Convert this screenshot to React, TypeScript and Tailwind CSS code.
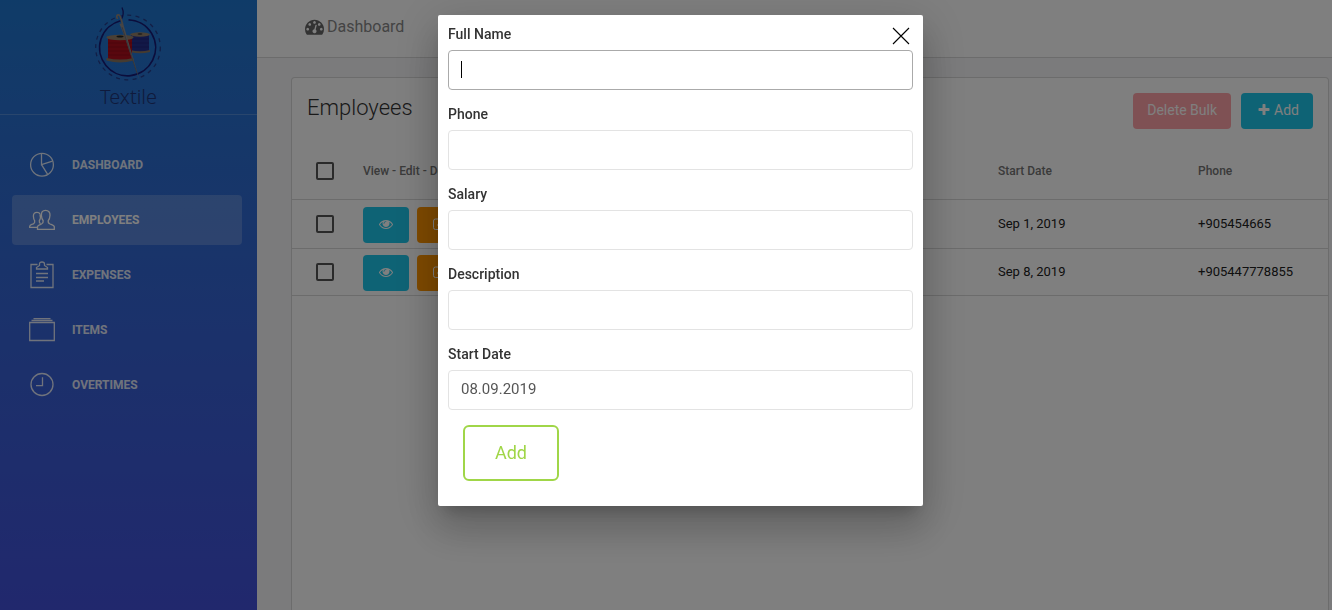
import type { ReactNode } from 'react';

const TACHOMETER =
  'M384 1152q0-53-37.5-90.5t-90.5-37.5-90.5 37.5-37.5 90.5 37.5 90.5 90.5 37.5 90.5-37.5 37.5-90.5zm192-448q0-53-37.5-90.5t-90.5-37.5-90.5 37.5-37.5 90.5 37.5 90.5 90.5 37.5 90.5-37.5 37.5-90.5zm428 481l101-382q6-26-7.5-48.5t-38.5-29.5-48 6.5-30 39.5l-101 382q-60 5-107 43.5t-63 98.5q-20 77 20 146t117 89 146-20 89-117q16-60-6-117t-72-91zm660-33q0-53-37.5-90.5t-90.5-37.5-90.5 37.5-37.5 90.5 37.5 90.5 90.5 37.5 90.5-37.5 37.5-90.5zm-640-640q0-53-37.5-90.5t-90.5-37.5-90.5 37.5-37.5 90.5 37.5 90.5 90.5 37.5 90.5-37.5 37.5-90.5zm448 192q0-53-37.5-90.5t-90.5-37.5-90.5 37.5-37.5 90.5 37.5 90.5 90.5 37.5 90.5-37.5 37.5-90.5zm320 448q0 261-141 483-19 29-54 29h-1402q-35 0-54-29-141-221-141-483 0-182 71-348t191-286 286-191 348-71 348 71 286 191 191 286 71 348z';
const EYE =
  'M1664 960q-152-236-381-353 61 104 61 225 0 185-131.5 316.5t-316.5 131.5-316.5-131.5-131.5-316.5q0-121 61-225-229 117-381 353 133 205 333.5 326.5t434.5 121.5 434.5-121.5 333.5-326.5zm-720-384q0-20-14-34t-34-14q-125 0-214.5 89.5t-89.5 214.5q0 20 14 34t34 14 34-14 14-34q0-86 61-147t147-61q20 0 34-14t14-34zm848 384q0 34-20 69-140 230-376.5 368.5t-499.5 138.5-499.5-139-376.5-368q-20-35-20-69t20-69q140-229 376.5-368t499.5-139 499.5 139 376.5 368q20 35 20 69z';
const PLUS =
  'M1600 736v192q0 40-28 68t-68 28h-416v416q0 40-28 68t-68 28h-192q-40 0-68-28t-28-68v-416h-416q-40 0-68-28t-28-68v-192q0-40 28-68t68-28h416v-416q0-40 28-68t68-28h192q40 0 68 28t28 68v416h416q40 0 68 28t28 68z';

function Glyph({ d, className }: { d: string; className: string }) {
  return (
    <svg viewBox="0 0 1792 1792" fill="currentColor" aria-hidden="true" className={className}>
      <path d={d} />
    </svg>
  );
}

function Logo() {
  return (
    <svg viewBox="0 0 68 76" className="h-[76px] w-[68px]" aria-hidden="true" fill="none">
      <circle cx="33" cy="40.500" r="32.300" stroke="#243d8c" strokeWidth="1.3" strokeDasharray="4 4.4" />
      <path d="M33.500 12.800A28 28 0 1 1 25.500 13.700" stroke="#171b78" strokeWidth="1.7" />
      <path d="M26 13C28.500 9 29 5 27 .500" stroke="#171b78" strokeWidth="1.3" />
      <rect x="36" y="28" width="18" height="17" fill="#25308e" />
      <path d="M36 32h18M36 36h18M36 40h18" stroke="#1b2478" strokeWidth=".6" />
      <ellipse cx="45" cy="27.500" rx="10" ry="2.200" fill="#94806a" />
      <ellipse cx="45" cy="27" rx="2.500" ry=".8" fill="#333" />
      <path d="M35 43q10 2.500 20 0v2q-10 2.500-20 0z" fill="#8a7660" />
      <rect x="13" y="31" width="24" height="22" fill="#b00f1c" />
      <path d="M13 36h24M13 40h24M13 44h24M13 48h24" stroke="#930b18" strokeWidth=".7" />
      <ellipse cx="25" cy="30.500" rx="13.500" ry="2.700" fill="#94806a" />
      <ellipse cx="25" cy="29.500" rx="3.500" ry="1" fill="#222" />
      <path d="M11.500 51q13.500 3 27 0v2.500q-13.500 4-27 0z" fill="#8a7660" />
      <path d="M24.500 17L28 16 45 75Q39.500 59 34 43Q29 27 24.500 17Z" fill="#8c8b8d" />
      <path d="M22.500 12Q20.500 7.500 24 8Q25.500 9 27.500 17" stroke="#93877c" strokeWidth="1.7" />
      <path d="M27 20L42 66" stroke="#62626a" strokeWidth=".7" />
    </svg>
  );
}

function MenuIcon({ children }: { children: ReactNode }) {
  return (
    <svg
      viewBox="0 0 26 28"
      className="h-[28px] w-[26px] shrink-0"
      fill="none"
      stroke="currentColor"
      strokeWidth="1.3"
      aria-hidden="true"
    >
      {children}
    </svg>
  );
}

const menu: { label: string; active?: boolean; icon: ReactNode }[] = [
  {
    label: 'Dashboard',
    icon: (
      <>
        <circle cx="13" cy="13.700" r="11.400" />
        <path d="M12.500 2.300V13.700L23.500 10.200M12.500 13.700L18.500 23.200" />
      </>
    ),
  },
  {
    label: 'Employees',
    active: true,
    icon: (
      <>
        <path d="M16.500 4.300C13.500 4.300 12.200 6.400 12.400 9.300C12.500 11.300 13 13.500 14.200 14.800C14.400 16.800 13.800 17.500 12.500 18C10.500 18.800 8.500 19.300 8.500 20.800V23.300H25.300V20.800C25.300 19.300 23 18.800 21 18C19.600 17.500 19 16.800 19.200 14.800C20.400 13.500 20.900 11.300 21 9.300C21.200 6.400 19.500 4.300 16.500 4.300Z" />
        <path d="M11 8C10.500 6.800 9.500 6.300 8 6.300C5.500 6.300 4.300 7.800 4.400 10.300C4.500 12.300 4.900 13.800 5.700 14.800C6 16.800 5.500 17.300 4.300 17.800C2.500 18.500 .700 18.800 .700 20.300V21.300H8.500M11 8.300C11.800 10.800 11.300 13.300 10.300 14.800C10.100 16.300 10.400 17 11.600 17.600" />
      </>
    ),
  },
  {
    label: 'Expenses',
    icon: (
      <>
        <path d="M8.500 3.500H2V26.500H24V3.500H17.500" />
        <path d="M7.500 8V6.500L10.500 4.500V3Q10.500 1 13 1T15.500 3V4.500L18.500 6.500V8Z" />
        <path d="M7 12.500H19M7 16.500H19M7 20H15" />
      </>
    ),
  },
  {
    label: 'Items',
    icon: (
      <>
        <path d="M.700 6.500H25.300V24.500H.700Z" />
        <path d="M2.500 4.500H23.500M4.500 2.700H21.500" />
      </>
    ),
  },
  {
    label: 'Overtimes',
    icon: (
      <>
        <circle cx="13" cy="13.500" r="11" />
        <path d="M13.500 6.200V14.700H7" />
      </>
    ),
  },
];

const employees = [
  { start: 'Sep 1, 2019', phone: '+905454665', height: 'h-[49px]' },
  { start: 'Sep 8, 2019', phone: '+905447778855', height: 'h-[47px]' },
];

const fields = [
  { id: 'full-name', label: 'Full Name', value: '' },
  { id: 'phone', label: 'Phone', value: '' },
  { id: 'salary', label: 'Salary', value: '' },
  { id: 'description', label: 'Description', value: '' },
  { id: 'start-date', label: 'Start Date', value: '08.09.2019' },
];

function Check({ label }: { label: string }) {
  return (
    <input
      type="checkbox"
      aria-label={label}
      className="ml-6 block size-[18px] appearance-none rounded-[2px] border-2 border-[#555]"
    />
  );
}

function Sidebar() {
  return (
    <aside className="w-[257px] shrink-0 bg-linear-to-b from-[#1f77d0] to-[#4250db] text-white">
      <div className="flex h-[115px] flex-col items-center border-b border-white/20 pt-[7px]">
        <Logo />
        <span className="font-['Noto_Sans'] text-xl leading-[28px] font-light text-[#1f3578]">Textile</span>
      </div>
      <nav className="flex flex-col gap-[5px] pt-[25px] pr-[15px] pl-3">
        {menu.map((item) => (
          <a
            key={item.label}
            href="#"
            className={
              item.active
                ? 'flex h-[50px] items-center gap-[17px] rounded bg-white/20 pl-[17px]'
                : 'flex h-[50px] items-center gap-[17px] rounded pl-[17px] opacity-85'
            }
          >
            <MenuIcon>{item.icon}</MenuIcon>
            <span className="text-xs font-bold uppercase">{item.label}</span>
          </a>
        ))}
      </nav>
    </aside>
  );
}

function EmployeesTable() {
  return (
    <table className="w-full table-fixed border-collapse text-left text-[13px] text-[#212121]">
      <colgroup>
        <col className="w-[71px]" />
        <col className="w-[635px]" />
        <col className="w-[200px]" />
        <col />
      </colgroup>
      <thead>
        <tr className="h-[55px] border-b border-black/15 text-xs text-[#757575]">
          <th>
            <Check label="Select all" />
          </th>
          <th className="font-medium">View - Edit - Delete</th>
          <th className="font-medium">Start Date</th>
          <th className="font-medium">Phone</th>
        </tr>
      </thead>
      <tbody>
        {employees.map((row) => (
          <tr key={row.phone} className={`${row.height} border-b border-black/15`}>
            <td>
              <Check label={`Select ${row.phone}`} />
            </td>
            <td>
              <div className="flex gap-2 pt-[2px]">
                <button
                  aria-label="View"
                  className="flex h-9 w-[46px] items-center justify-center rounded bg-[#1dc7ea] pb-[2px] text-white"
                >
                  <Glyph d={EYE} className="size-[14px]" />
                </button>
                <button
                  aria-label="Edit"
                  className="flex h-9 w-[46px] items-center justify-center rounded bg-[#ff9500] pb-[2px] text-white"
                >
                  <svg viewBox="0 0 14 14" className="size-[14px]" fill="none" stroke="currentColor" aria-hidden="true">
                    <path d="M8 2H2.500Q.500 2 .500 4V10.500Q.500 12.500 2.500 12.500H9Q11 12.500 11 10.500V8M5 7L11 1 13 3 7 9H5Z" />
                  </svg>
                </button>
              </div>
            </td>
            <td>{row.start}</td>
            <td>{row.phone}</td>
          </tr>
        ))}
      </tbody>
    </table>
  );
}

function AddDialog() {
  return (
    <div className="fixed inset-0 flex items-start justify-center overflow-auto bg-black/50 pt-[15px] pl-[29px]">
      <form
        role="dialog"
        aria-label="Add employee"
        className="relative w-[485px] rounded-[2px] bg-white px-[10px] pt-[9px] pb-[25px] shadow-[0_11px_15px_-7px_rgba(0,0,0,0.2),0_24px_38px_3px_rgba(0,0,0,0.14),0_9px_46px_8px_rgba(0,0,0,0.12)]"
      >
        <button type="button" aria-label="Close" className="absolute top-[12px] right-[13px] text-black">
          <svg viewBox="0 0 18 18" className="size-[18px]" stroke="currentColor" strokeWidth="1.1" aria-hidden="true">
            <path d="M1 1L17 17M17 1L1 17" />
          </svg>
        </button>
        <div className="flex flex-col gap-[14px]">
          {fields.map((field, index) => (
            <div key={field.id} className="flex flex-col gap-[6px]">
              <label htmlFor={field.id} className="self-start text-sm font-medium text-[#333]">
                {field.label}
              </label>
              <div className="relative">
                <input
                  id={field.id}
                  type="text"
                  defaultValue={field.value}
                  className={
                    index === 0
                      ? 'block h-10 w-full rounded border border-[#aaa] px-3 pb-[2px] text-[15px] text-[#565656] outline-none'
                      : 'block h-10 w-full rounded border border-[#e3e3e3] px-3 pb-[2px] text-[15px] text-[#565656] outline-none'
                  }
                />
                {index === 0 && <span aria-hidden="true" className="absolute top-[11px] left-[13px] h-[17px] w-px bg-black" />}
              </div>
            </div>
          ))}
        </div>
        <button
          type="submit"
          className="mt-[15px] ml-[15px] block h-14 w-24 rounded-md border-2 border-[#a0d648] text-lg text-[#a0d648]"
        >
          Add
        </button>
      </form>
    </div>
  );
}

export default function App() {
  return (
    <div className="flex min-h-screen font-[Roboto,sans-serif]">
      <Sidebar />
      <div className="flex min-w-0 flex-1 flex-col bg-[#f7f7f8]">
        <header className="flex h-[58px] items-center border-b border-black/15 bg-white px-12 pb-1">
          <a href="#" className="flex items-center gap-[3px] text-base text-[#888]">
            <Glyph d={TACHOMETER} className="size-[19px] text-[#666]" />
            Dashboard
          </a>
        </header>
        <main className="flex flex-1 flex-col pt-[19px] pr-[3px] pl-[34px]">
          <section className="flex-1 rounded-t border border-b-0 border-black/15 bg-white">
            <div className="flex h-[66px] items-start justify-between px-[15px] pt-[15px]">
              <h1 className="text-[22px] leading-[30px] font-light text-[#333]">Employees</h1>
              <div className="flex gap-[10px]">
                <button className="h-9 rounded bg-[#ff4a55] px-[14px] pb-[2px] text-sm text-white opacity-50">
                  Delete Bulk
                </button>
                <button className="flex h-9 items-center gap-[3px] rounded bg-[#1dc7ea] pr-[14px] pb-[2px] pl-4 text-sm text-white">
                  <Glyph d={PLUS} className="size-[14px]" />
                  Add
                </button>
              </div>
            </div>
            <EmployeesTable />
          </section>
        </main>
      </div>
      <AddDialog />
    </div>
  );
}
